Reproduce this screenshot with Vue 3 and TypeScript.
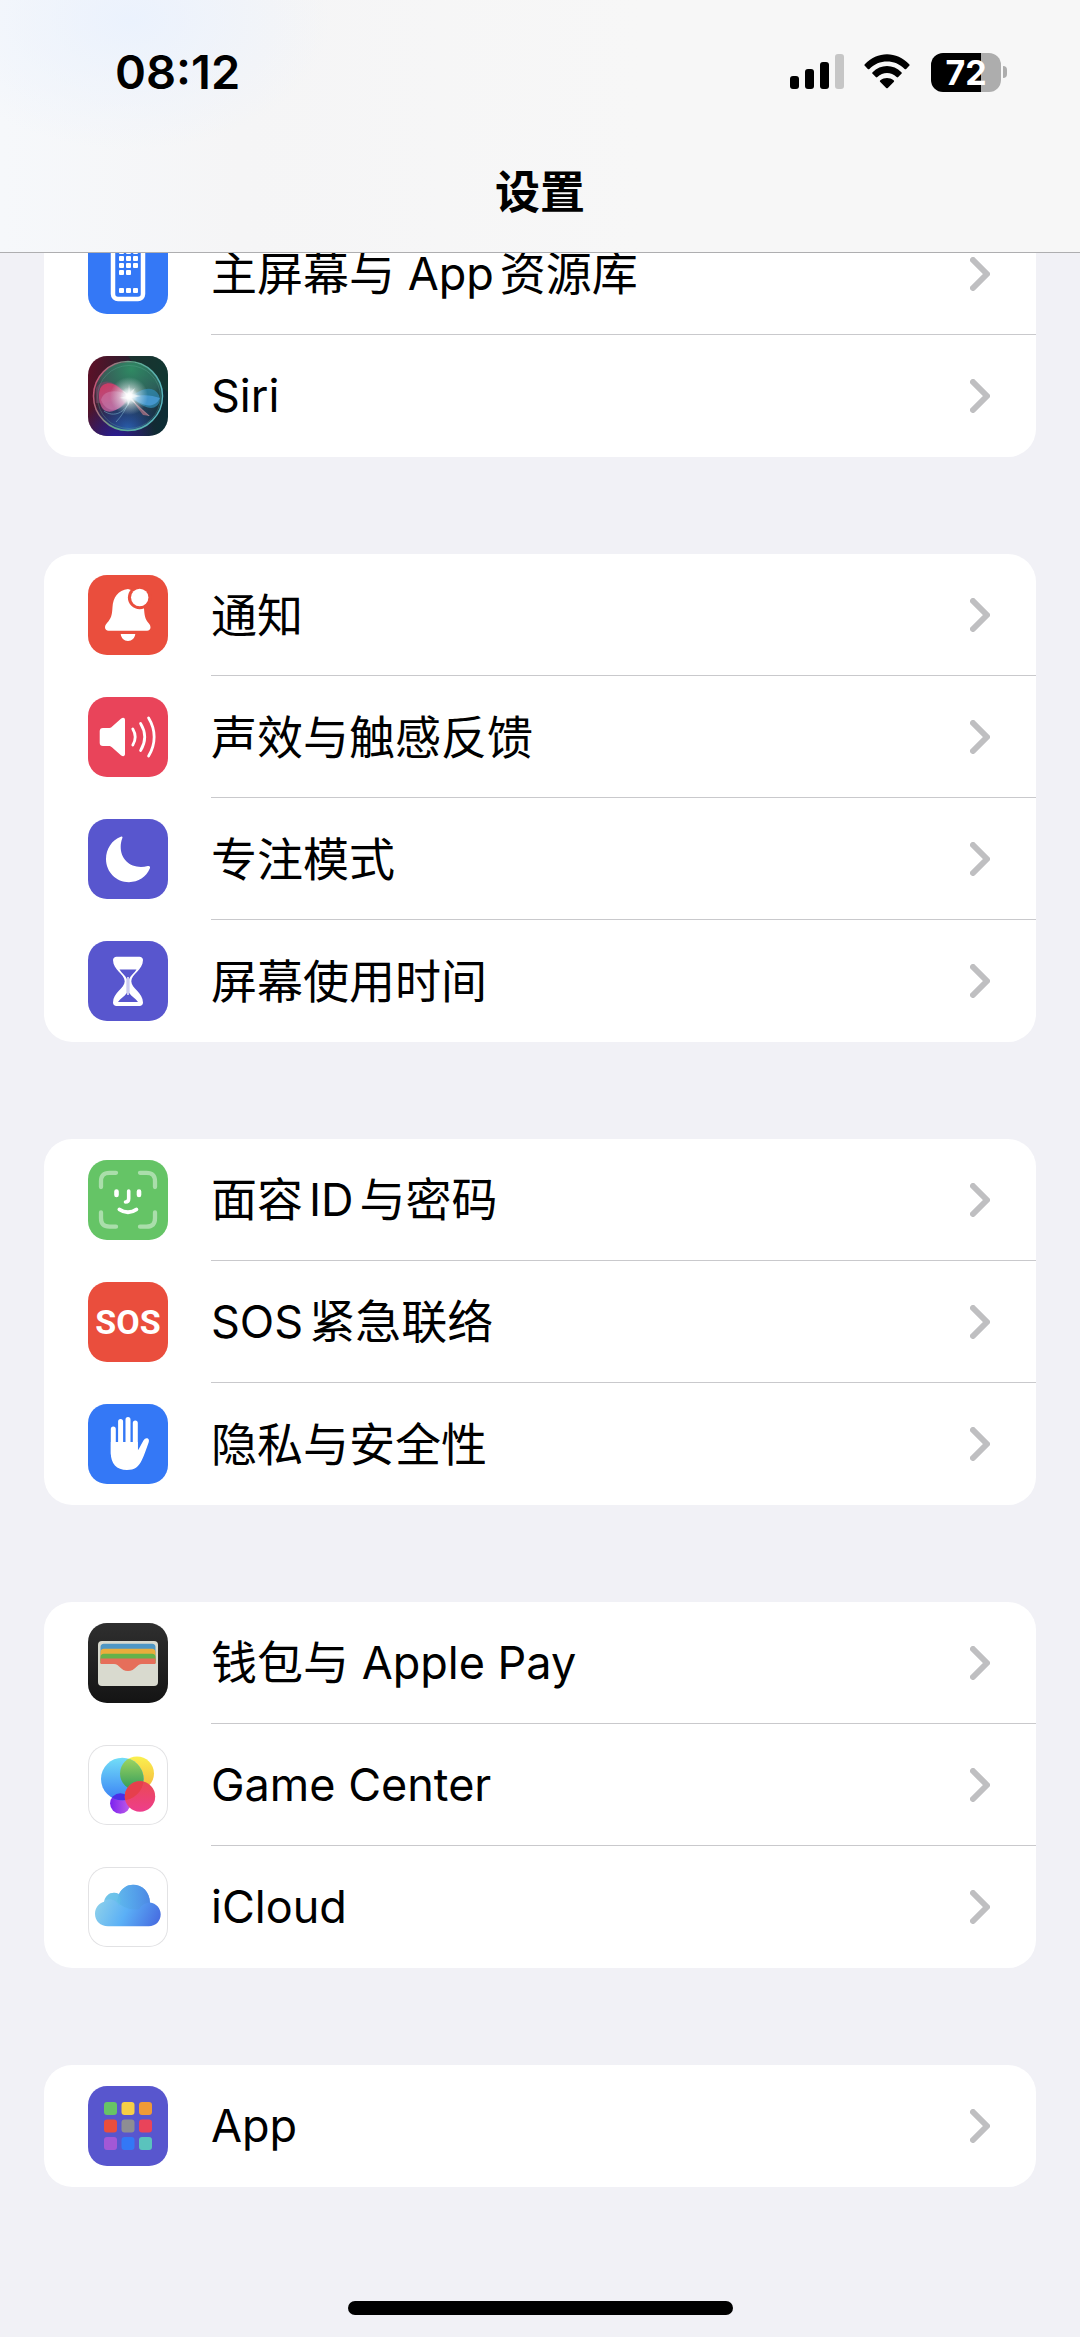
<script setup lang="ts">
type IconName =
  | 'home' | 'siri' | 'bell' | 'sound' | 'moon' | 'hourglass'
  | 'face' | 'sos' | 'hand' | 'wallet' | 'game' | 'cloud' | 'apps'

interface Item {
  icon: IconName
  label: string
}

interface Segment {
  text: string
  latin: boolean
  spaced: boolean
}

const groups: Item[][] = [
  [
    { icon: 'home', label: '主屏幕与 App资源库' },
    { icon: 'siri', label: 'Siri' },
  ],
  [
    { icon: 'bell', label: '通知' },
    { icon: 'sound', label: '声效与触感反馈' },
    { icon: 'moon', label: '专注模式' },
    { icon: 'hourglass', label: '屏幕使用时间' },
  ],
  [
    { icon: 'face', label: '面容ID与密码' },
    { icon: 'sos', label: 'SOS紧急联络' },
    { icon: 'hand', label: '隐私与安全性' },
  ],
  [
    { icon: 'wallet', label: '钱包与 Apple Pay' },
    { icon: 'game', label: 'Game Center' },
    { icon: 'cloud', label: 'iCloud' },
  ],
  [{ icon: 'apps', label: 'App' }],
]

const tileColor: Record<IconName, string> = {
  home: 'blue',
  siri: 'plain',
  bell: 'red',
  sound: 'pink',
  moon: 'indigo',
  hourglass: 'indigo',
  face: 'green',
  sos: 'red',
  hand: 'blue',
  wallet: 'black',
  game: 'white',
  cloud: 'white',
  apps: 'indigo',
}

const gridColors = [
  '#67c466', '#f6ce46', '#f09a37',
  '#ea4e3d', '#8e8e93', '#e9445a',
  '#a358d6', '#3378f6', '#5ac3bd',
]

// Splits a label where Latin and Chinese text meet. A gap is added at each
// such boundary, unless the label already has a space there.
function segments(label: string): Segment[] {
  const parts = label.match(/[\x20-\x7e]+|[^\x20-\x7e]+/g) ?? []
  return parts.map((text, i) => ({
    text,
    latin: /[\x20-\x7e]/.test(text),
    spaced: i > 0 && !text.startsWith(' '),
  }))
}
</script>

<template>
  <div class="page">
    <header class="header">
      <div class="status">
        <time class="clock">08:12</time>
        <div class="indicators">
          <svg class="signal" width="54" height="36" viewBox="0 0 54 36" aria-hidden="true">
            <rect x="0" y="22" width="9" height="13" rx="3" />
            <rect x="15" y="15" width="9" height="20" rx="3" />
            <rect x="30" y="8" width="9" height="27" rx="3" />
            <rect x="45" y="0" width="9" height="35" rx="3" fill="#c6c6c6" />
          </svg>
          <svg class="wifi" width="46" height="36" viewBox="0 0 46 36" aria-hidden="true">
            <path d="M.8 10.200C13-3.200 33-3.200 45.200 10.200c.6.6.6 1 0 1.600l-3 3.100c-.6.6-1 .6-1.600 0C31 5 15 5 5.400 14.900c-.6.6-1 .6-1.600 0l-3-3.100c-.6-.6-.6-1 0-1.600z" />
            <path d="M8.600 18.200c8-8.200 20.800-8.200 28.800 0 .6.6.6 1 0 1.600l-3.200 3.200c-.6.6-1 .6-1.600 0-5.500-5.300-13.700-5.300-19.200 0-.6.6-1 .6-1.600 0l-3.200-3.200c-.6-.6-.6-1 0-1.600z" />
            <path d="M16.400 26.300c3.900-3.200 9.300-3.200 13.200 0 .7.6.7 1 .1 1.600l-5.900 6c-.6.6-1 .6-1.600 0l-5.900-6c-.6-.6-.6-1 .1-1.600z" />
          </svg>
          <div class="battery">
            <div class="cell"><span>72</span></div>
            <div class="nub"></div>
          </div>
        </div>
      </div>
      <h1 class="title">设置</h1>
    </header>

    <main class="list">
      <nav v-for="(group, g) in groups" :key="g" class="card">
        <a v-for="item in group" :key="item.icon" href="#" class="row">
          <span class="tile" :class="tileColor[item.icon]">
            <svg v-if="item.icon === 'home'" viewBox="0 0 80 80">
              <rect x="25" y="13" width="30" height="52" rx="5" fill="none" stroke="#fff" stroke-width="4.500" />
              <g fill="#fff">
                <template v-for="y in [15, 22, 29, 54]" :key="y">
                  <rect x="31" :y="y" width="5" height="5" rx="1" />
                  <rect x="38" :y="y" width="5" height="5" rx="1" />
                  <rect x="45" :y="y" width="5" height="5" rx="1" />
                </template>
                <rect x="31" y="36" width="5" height="5" rx="1" />
                <rect x="38" y="36" width="5" height="5" rx="1" />
              </g>
            </svg>

            <svg v-else-if="item.icon === 'siri'" viewBox="0 0 80 80">
              <defs>
                <linearGradient id="siri-bg" x1="0" y1="0.3" x2="1" y2="0.5">
                  <stop offset="0" stop-color="#5a1128" />
                  <stop offset="0.5" stop-color="#26202e" />
                  <stop offset="1" stop-color="#0d2c34" />
                </linearGradient>
                <radialGradient id="siri-green" cx="0.55" cy="0.1" r="0.75">
                  <stop offset="0" stop-color="#2f8a63" />
                  <stop offset="0.6" stop-color="#35776a" stop-opacity="0.7" />
                  <stop offset="1" stop-color="#2b4a58" stop-opacity="0.2" />
                </radialGradient>
                <radialGradient id="siri-deep" cx="0.5" cy="1" r="0.6">
                  <stop offset="0" stop-color="#2a62b0" />
                  <stop offset="1" stop-color="#17335e" stop-opacity="0" />
                </radialGradient>
                <radialGradient id="siri-corner" cx="0.35" cy="1.05" r="0.5">
                  <stop offset="0" stop-color="#2c1c9a" />
                  <stop offset="1" stop-color="#2c1c9a" stop-opacity="0" />
                </radialGradient>
                <linearGradient id="siri-ring" x1="0" y1="0.3" x2="1" y2="0.6">
                  <stop offset="0" stop-color="#c94f74" />
                  <stop offset="0.45" stop-color="#5ea98c" />
                  <stop offset="1" stop-color="#58b6c2" />
                </linearGradient>
                <linearGradient id="siri-pink" x1="0" y1="0" x2="0.4" y2="1">
                  <stop offset="0" stop-color="#d8365f" />
                  <stop offset="1" stop-color="#b0609c" />
                </linearGradient>
                <radialGradient id="siri-glow">
                  <stop offset="0" stop-color="#fff" />
                  <stop offset="0.3" stop-color="#fff" stop-opacity="0.9" />
                  <stop offset="1" stop-color="#d5eef0" stop-opacity="0" />
                </radialGradient>
              </defs>
              <rect width="80" height="80" fill="url(#siri-bg)" />
              <path d="M40 0h40v36L55 20z" fill="#123f31" opacity="0.6" />
              <rect width="80" height="80" fill="url(#siri-corner)" />
              <circle cx="40" cy="40" r="34" fill="url(#siri-green)" />
              <circle cx="40" cy="40" r="34" fill="url(#siri-deep)" />
              <path d="M8 32C16 20 28 26 41 39 30 41 18 49 8 47z" fill="#8e4470" opacity="0.5" />
              <path d="M41 41C31 31 24 24 15 29 9 33 10 49 16 54 25 60 36 49 41 41z" fill="url(#siri-pink)" opacity="0.9" />
              <path d="M13 44C16 33 31 33 42 41 34 56 19 59 13 44z" fill="#d287b5" opacity="0.45" />
              <path d="M41 41C50 36 58 30 66 34 76 40 72 52 63 52 54 51 49 45 41 41z" fill="#2f86ac" opacity="0.8" />
              <path d="M44 41C54 38 64 39 72 42 66 54 53 50 44 41z" fill="#4fa3e2" opacity="0.7" />
              <path d="M16 55C26 62 37 57 43 43M28 66C34 60 39 51 42 43M43 43C49 50 54 54 61 60" fill="none" stroke="#7eb5cd" stroke-width="1" opacity="0.55" />
              <path d="M43 43l19 17-7-1z" fill="#d47e8b" opacity="0.6" />
              <circle cx="41" cy="40" r="19" fill="url(#siri-glow)" opacity="0.75" />
              <circle cx="41" cy="40" r="9" fill="url(#siri-glow)" />
              <path d="M41 28l1 8 5-4-3 6 9 2-9 2 4 6-6-4-2 6-1-7-8-1 8-2-5-6 6 4z" fill="#fff" opacity="0.5" />
              <circle cx="40" cy="40" r="34.500" fill="none" stroke="url(#siri-ring)" stroke-width="1.500" />
              <circle cx="41" cy="41" r="31.500" fill="none" stroke="#62ad99" stroke-width="0.800" opacity="0.4" />
            </svg>

            <svg v-else-if="item.icon === 'bell'" viewBox="0 0 80 80">
              <path fill="#fff" d="M40 14C30 15 25 23 24.500 32 24 41 23 43.500 19 48c-1.500 1.800-2 3-2 4.500 0 2 1.500 3.200 3.500 3.200h38.500c2 0 3.500-1.200 3.500-3.200 0-1.500-.5-2.700-2-4.500C57 43.500 56.500 41 56 33V20L43 15z" />
              <circle cx="51.700" cy="22.500" r="11.800" fill="#ea4e3d" />
              <circle cx="51.700" cy="22.500" r="8.700" fill="#fff" />
              <path fill="#fff" d="M32.700 59h14.600c-.5 4-3.300 7-7.300 7s-6.800-3-7.300-7z" />
            </svg>

            <svg v-else-if="item.icon === 'sound'" viewBox="0 0 80 80">
              <path fill="#fff" d="M15 31h5.500c1.500 0 2.300-.3 3.400-1.300l9-8c2.200-1.800 4.100-1 4.100 1.200v34.200c0 2.200-1.900 3-4.100 1.200l-9-8c-1.100-1-1.900-1.300-3.400-1.300H15c-2.200 0-3.300-1.200-3.300-3.300V34.300C11.700 32.200 12.800 31 15 31z" />
              <g fill="none" stroke="#fff" stroke-width="2.800" stroke-linecap="round">
                <path d="M44.800 32c3 5 3 11 0 16" />
                <path d="M52.600 26.500c5.200 8.500 5.200 18.500 0 27" />
                <path d="M60.600 21c7.400 12 7.400 26 0 38" />
              </g>
            </svg>

            <svg v-else-if="item.icon === 'moon'" viewBox="0 0 80 80">
              <path fill="#fff" d="M32.800 17.700C23.800 21 18 30 18 40c0 13 10.200 23.200 23 23.200 9.200 0 17.300-5.200 20.800-13.600.8-1.900-.2-3-2-2.500C45 51 32.300 42 32.700 27.300c.1-3 .6-5.300 1.500-7.700.7-1.600.1-2.500-1.400-1.900z" />
            </svg>

            <svg v-else-if="item.icon === 'hourglass'" viewBox="0 0 80 80">
              <path fill="#fff" d="M28.500 15.700h23c2 0 3.500 1.300 3.500 3.300 0 10-11.700 14-11.700 21.300S55 51.500 55 61.500c0 2.300-1.400 3.500-3.500 3.500h-23c-2.100 0-3.500-1.200-3.500-3.500 0-10 11.700-14 11.700-21.200S25 29 25 19c0-2 1.500-3.300 3.500-3.300z" />
              <path fill="#5856ce" d="M31.500 28.500h17c-2 3.500-6 6-7.300 9.500v14c2.500 3.500 6.300 5.500 8.800 9H30c2.500-3.500 6.300-5.500 8.800-9V38c-1.300-3.500-5.300-6-7.300-9.500z" />
              <path fill="#fff" d="M39.300 36h1.400v18h-1.400z" />
            </svg>

            <svg v-else-if="item.icon === 'face'" viewBox="0 0 80 80">
              <g fill="none" stroke="#fff" stroke-width="4.300" stroke-linecap="round">
                <path opacity="0.450" d="M13 27v-5.500C13 15.500 15.500 12.800 21.500 12.800H28M52 12.800h6.500c6 0 8.500 2.700 8.500 8.700V27M67 52.500V58c0 6-2.500 8.700-8.500 8.700H52M28 66.700h-6.500C15.500 66.700 13 64 13 58v-5.500" />
                <path d="M28.500 31.500v3.500M51 31.500v3.500" stroke-width="4.600" />
                <path d="M40.700 31v7.500c0 2.300-1 3.500-3.200 3.500" stroke-width="3.600" />
                <path d="M31.500 49.500c5 3.600 12 3.600 16.800 0" stroke-width="4" />
              </g>
            </svg>

            <svg v-else-if="item.icon === 'sos'" viewBox="0 0 80 80">
              <text class="sos" x="40" y="52" text-anchor="middle">SOS</text>
            </svg>

            <svg v-else-if="item.icon === 'hand'" viewBox="0 0 80 80">
              <g stroke="#fff" stroke-width="5" stroke-linecap="round">
                <path d="M25.300 25v25M32.600 17.500v30M40 15.500v30M47.300 19v30" />
              </g>
              <path fill="#fff" d="M22.800 38h27v8.500c1.800-2.700 4-7 5.800-10.200 1.200-2.100 3-2.600 4.300-1.700 1.100.8 1.300 2 .8 3.600-1.800 5.300-4.400 12.800-6.800 17.800C50.500 63 46.500 66 39 66c-10.500 0-16.200-6.500-16.200-17z" />
            </svg>

            <svg v-else-if="item.icon === 'wallet'" viewBox="0 0 80 80">
              <rect x="10" y="18" width="60" height="45" rx="4" fill="#d9dacf" />
              <path d="M12.500 24c0-2 1.200-3.300 3.300-3.300h48.400c2.100 0 3.300 1.300 3.300 3.300v14h-55z" fill="#4f97c4" />
              <path d="M12.500 29c0-2 1.200-3.300 3.300-3.300h48.400c2.100 0 3.300 1.300 3.300 3.300v11h-55z" fill="#eaae3c" />
              <path d="M12.500 34c0-2 1.200-3.300 3.300-3.300h48.400c2.100 0 3.300 1.300 3.300 3.300v6h-55z" fill="#66b24b" />
              <path d="M12.500 35.500h55V41H54c-5.500 0-6.500 7-14 7s-8.500-7-14-7H12.500z" fill="#e66e5a" />
            </svg>

            <svg v-else-if="item.icon === 'game'" viewBox="0 0 80 80">
              <defs>
                <linearGradient id="gc-blue" x1="0" y1="0" x2="0" y2="1">
                  <stop offset="0" stop-color="#72def7" />
                  <stop offset="1" stop-color="#3a80f5" />
                </linearGradient>
                <linearGradient id="gc-yellow" x1="0" y1="0" x2="0" y2="1">
                  <stop offset="0" stop-color="#faf04f" />
                  <stop offset="1" stop-color="#f5b63d" />
                </linearGradient>
                <linearGradient id="gc-green" x1="0" y1="0" x2="0" y2="1">
                  <stop offset="0" stop-color="#a4d860" />
                  <stop offset="1" stop-color="#2f9a5c" />
                </linearGradient>
                <linearGradient id="gc-pink" x1="0" y1="0" x2="0" y2="1">
                  <stop offset="0" stop-color="#ea4a52" />
                  <stop offset="1" stop-color="#ee3d8c" />
                </linearGradient>
                <linearGradient id="gc-purple" x1="0" y1="0" x2="1" y2="0">
                  <stop offset="0" stop-color="#7a22ef" />
                  <stop offset="1" stop-color="#c25de8" />
                </linearGradient>
                <clipPath id="gc-clip"><circle cx="34.300" cy="34" r="21.300" /></clipPath>
              </defs>
              <circle cx="49" cy="28.500" r="17" fill="url(#gc-yellow)" />
              <circle cx="32.300" cy="58.500" r="10.200" fill="url(#gc-purple)" />
              <circle cx="34.300" cy="34" r="21.300" fill="url(#gc-blue)" />
              <g clip-path="url(#gc-clip)">
                <circle cx="49" cy="28.500" r="17" fill="url(#gc-green)" />
                <circle cx="32.300" cy="58.500" r="10.200" fill="#4b2fe8" />
              </g>
              <circle cx="52" cy="51.500" r="15.200" fill="url(#gc-pink)" />
              <g clip-path="url(#gc-clip)">
                <circle cx="52" cy="51.500" r="15.200" fill="#e63f4c" />
              </g>
            </svg>

            <svg v-else-if="item.icon === 'cloud'" viewBox="0 0 80 80">
              <defs>
                <linearGradient id="ic-main" x1="0" y1="0.4" x2="1" y2="0.7">
                  <stop offset="0" stop-color="#90d2ea" />
                  <stop offset="0.5" stop-color="#5bb0f6" />
                  <stop offset="1" stop-color="#4870e2" />
                </linearGradient>
                <linearGradient id="ic-top" x1="0" y1="0.6" x2="1" y2="0.4">
                  <stop offset="0" stop-color="#59b5ea" />
                  <stop offset="1" stop-color="#4b84e0" />
                </linearGradient>
              </defs>
              <path fill="url(#ic-main)" d="M20 59.300C12.500 59.300 7 54 7 47c0-6 3.500-10.500 9-12.200C17 29 21 25.700 26 25.700c1.800 0 3.500.4 5 1.200C34 21 39 17.700 45 17.700c9.500 0 16.500 7 17 17.800 6 .8 10.700 5.500 10.700 11.800 0 7-5 12-12 12z" />
              <path fill="url(#ic-top)" opacity="0.7" d="M31 27C34 21 39 17.700 45 17.700c9.500 0 16.500 7 17 17.800-5 .3-9 3-10.500 6.500C44 44 32 40 29 34z" />
              <path fill="#5fc2e3" opacity="0.5" d="M17 33C18.500 28.500 22 25.700 26 25.700c5 0 9 6 5 13-2-5-7-8-14-5.700z" />
            </svg>

            <svg v-else viewBox="0 0 80 80">
              <rect
                v-for="(color, i) in gridColors"
                :key="color"
                :x="16 + (i % 3) * 17.5"
                :y="16 + Math.floor(i / 3) * 17.5"
                width="13"
                height="13"
                rx="3"
                :fill="color"
              />
            </svg>
          </span>
          <span class="body">
            <span class="label"><span v-for="(s, i) in segments(item.label)" :key="i" :class="{ latin: s.latin, spaced: s.spaced }">{{ s.text }}</span></span>
            <svg class="chevron" width="20" height="34" viewBox="0 0 20 34" aria-hidden="true">
              <path d="M3 3l14 14L3 31" />
            </svg>
          </span>
        </a>
      </nav>
    </main>

    <div class="home-indicator"></div>
  </div>
</template>

<style>
body {
  background: #f1f1f6;
}
</style>

<style scoped>
.page {
  display: flex;
  flex-direction: column;
  box-sizing: border-box;
  min-height: 100vh;
  padding-bottom: 22px;
  background: #f1f1f6;
  color: #000;
  font-family: Inter, "Noto Sans CJK SC", sans-serif;
}

.header {
  position: sticky;
  top: 0;
  z-index: 1;
  box-sizing: border-box;
  height: 253px;
  border-bottom: 1px solid #aeaeb0;
  background:
    radial-gradient(ellipse 200px 130px at 130px 20px, #ebf2fd, transparent),
    linear-gradient(90deg, #f6f8fb, #f5f5f6 240px, #f7f7f7 640px);
}

.status {
  display: flex;
  align-items: center;
  justify-content: space-between;
  height: 144px;
  padding: 0 73px 0 115px;
}

.clock {
  font-size: 47px;
  font-weight: 600;
  line-height: 56px;
}

.indicators {
  display: flex;
  align-items: center;
}

.signal {
  margin-right: 20px;
}

.wifi {
  margin-right: 21px;
}

.battery {
  display: flex;
  align-items: center;
  gap: 2px;
}

.cell {
  width: 70px;
  height: 39px;
  border-radius: 12px;
  background: linear-gradient(90deg, #000 50px, #adadad 50px);
  color: #fff;
  font-size: 34px;
  font-weight: 700;
  line-height: 39px;
  text-align: center;
}

.nub {
  width: 4px;
  height: 12px;
  border-radius: 0 6px 6px 0;
  background: #adadad;
}

.title {
  margin: 19px 0 0;
  font-size: 45px;
  font-weight: 600;
  line-height: 60px;
  text-align: center;
}

.list {
  display: flex;
  flex-direction: column;
  gap: 97px;
  margin: -40px 44px 0;
}

.card {
  overflow: hidden;
  border-radius: 28px;
  background: #fff;
}

.row {
  display: flex;
  align-items: center;
  height: 122px;
  padding-left: 44px;
  color: inherit;
  text-decoration: none;
}

.tile {
  flex: none;
  width: 80px;
  height: 80px;
  margin-right: 43px;
  overflow: hidden;
  border-radius: 19px;
}

.tile svg {
  display: block;
  width: 80px;
  height: 80px;
}

.blue {
  background: #3478f6;
}

.red {
  background: #ea4e3d;
}

.pink {
  background: #e9445a;
}

.indigo {
  background: #5856ce;
}

.green {
  background: #65c466;
}

.black {
  background: linear-gradient(#2f2f2f, #141414);
}

.white {
  background: #fff;
  box-shadow: inset 0 0 0 1px #e2e2e4;
}

.sos {
  fill: #fff;
  font-family: Roboto, sans-serif;
  font-size: 34px;
  font-weight: 700;
}

.body {
  display: flex;
  flex: 1;
  align-items: center;
  justify-content: space-between;
  box-sizing: border-box;
  height: 122px;
  padding-right: 46px;
  border-bottom: 1px solid #c9c9cc;
}

.row:last-child .body {
  border-bottom-color: transparent;
}

.label {
  font-size: 46px;
  line-height: 60px;
  white-space: pre;
}

.latin {
  font-size: 45px;
}

.spaced {
  margin-left: 6px;
}

.chevron path {
  fill: none;
  stroke: #bfbfc1;
  stroke-width: 6px;
  stroke-linecap: round;
  stroke-linejoin: round;
}

.home-indicator {
  align-self: center;
  width: 385px;
  height: 14px;
  margin-top: auto;
  border-radius: 7px;
  background: #000;
}
</style>
